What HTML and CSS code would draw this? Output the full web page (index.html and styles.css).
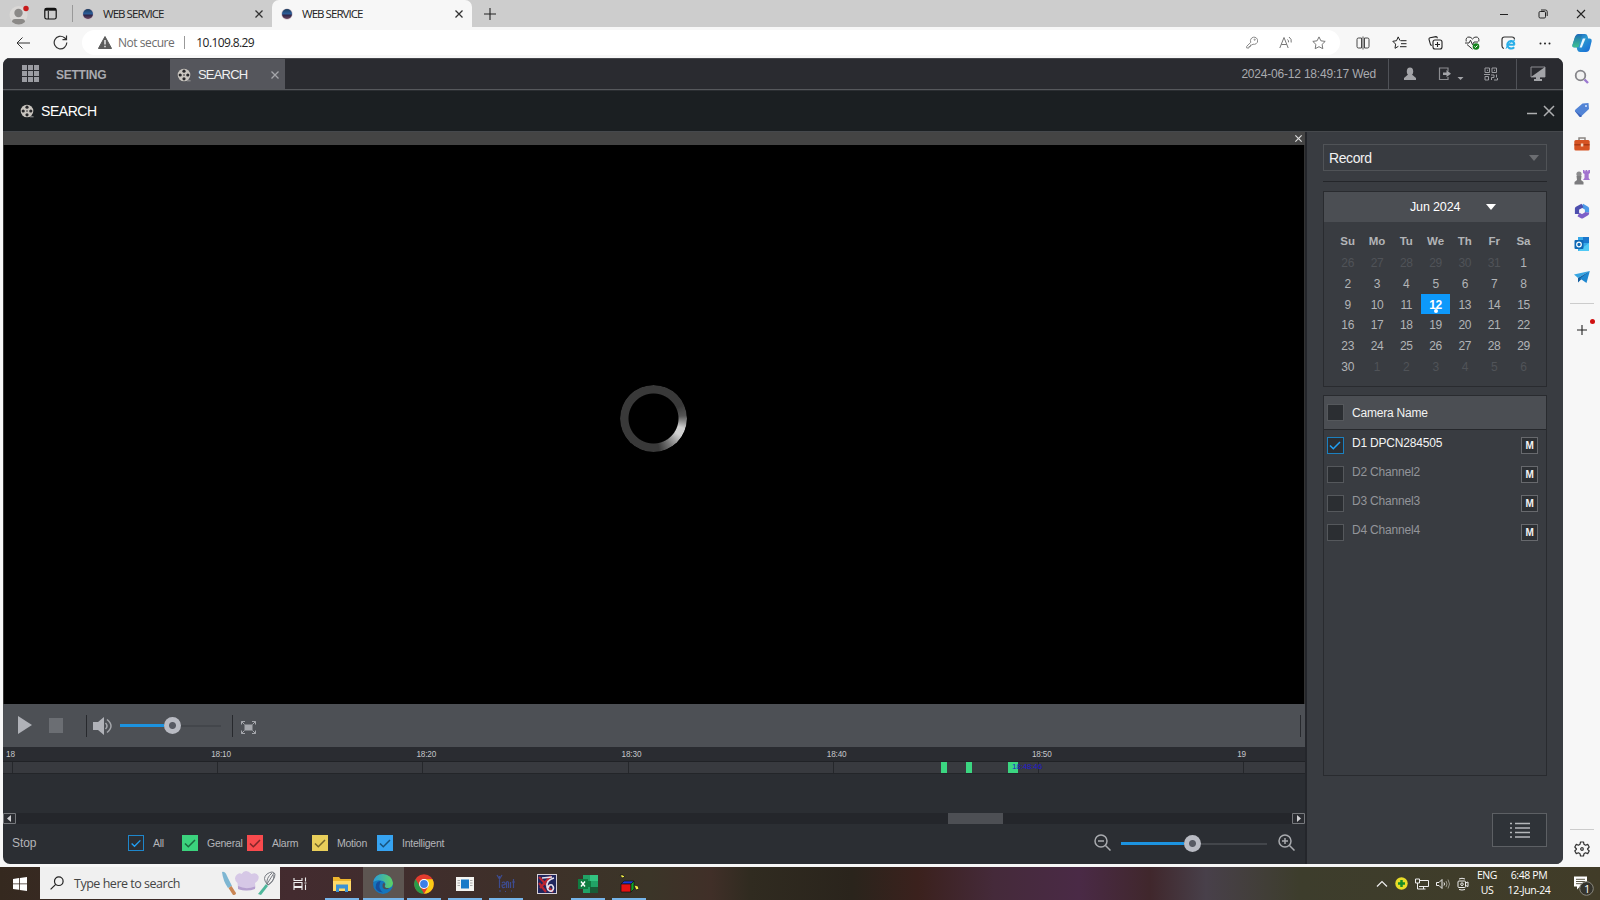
FILE: index.html
```html
<!DOCTYPE html>
<html lang="en">
<head>
<meta charset="utf-8">
<title>WEB SERVICE</title>
<link rel="stylesheet" href="styles.css">
</head>
<body>
<svg width="0" height="0" class="defs">
  <defs>
    <linearGradient id="gCop" x1="0" y1="0" x2="1" y2="1"><stop offset="0" stop-color="#1b4ab8"/><stop offset=".45" stop-color="#2b9ad0"/><stop offset="1" stop-color="#1565d8"/></linearGradient>
    <linearGradient id="gTeal" x1="0" y1="0" x2="0" y2="1"><stop offset="0" stop-color="#1b6fb5"/><stop offset="1" stop-color="#3fc28f"/></linearGradient>
    <linearGradient id="gEdge" x1="0" y1="0" x2="1" y2="0"><stop offset="0" stop-color="#2a9bdc"/><stop offset="1" stop-color="#5fd35f"/></linearGradient>
    <linearGradient id="gFav" x1="0" y1="0" x2="0" y2="1"><stop offset="0" stop-color="#1d3c5c"/><stop offset=".5" stop-color="#2e5f9c"/><stop offset=".6" stop-color="#2d2447"/><stop offset="1" stop-color="#6d4761"/></linearGradient>
    <symbol id="globe" viewBox="0 0 12 12"><circle cx="6" cy="6" r="5.6" fill="#c9b9c4"/><circle cx="6" cy="6" r="5" fill="url(#gFav)"/></symbol>
    <symbol id="x" viewBox="0 0 10 10"><path d="M1.5 1.5l7 7M8.500 1.500l-7 7" stroke="currentColor" fill="none" stroke-width="1.3"/></symbol>
    <symbol id="reel" viewBox="0 0 14 14"><circle cx="7" cy="7" r="6.3" fill="#c9c5bf"/><g fill="#28282a"><circle cx="7" cy="3.2" r="1.6"/><circle cx="7" cy="10.8" r="1.6"/><circle cx="3.2" cy="7" r="1.6"/><circle cx="10.8" cy="7" r="1.6"/><circle cx="7" cy="7" r=".8"/></g><path d="M10 12.8h3.6" stroke="#999"/></symbol>
    <symbol id="tick" viewBox="0 0 16 16"><path d="M3 8.500l3.300 3.300L13 5" fill="none" stroke="currentColor" stroke-width="1.5"/></symbol>
  </defs>
</svg>

<header class="tabs">
  <svg class="profile" width="22" height="24" viewBox="0 0 22 24"><circle cx="10.500" cy="13" r="9" fill="#dad8d6"/><circle cx="10.500" cy="11" r="4.200" fill="#8b8987"/><path d="M4 20q0-3 3-3h7q3 0 3 3-6 5-13 0z" fill="#8b8987"/><circle cx="18" cy="6.500" r="2.700" fill="#c81a1a"/></svg>
  <svg class="spaces" width="13" height="13" viewBox="0 0 13 13"><rect x=".8" y="1.300" width="11.400" height="10.700" rx="1.800" fill="none" stroke="#111" stroke-width="1.200"/><path d="M1 2.700h11" stroke="#111" stroke-width="2"/><path d="M4.300 4v8" stroke="#111"/></svg>
  <i class="tabs-sep"></i>
  <div class="tab tab-idle"><svg width="12" height="12"><use href="#globe"/></svg><span>WEB SERVICE</span><svg class="tab-x" width="10" height="10"><use href="#x"/></svg></div>
  <div class="tab tab-active"><svg width="12" height="12"><use href="#globe"/></svg><span>WEB SERVICE</span><svg class="tab-x" width="10" height="10"><use href="#x"/></svg></div>
  <svg class="newtab" width="12" height="12" viewBox="0 0 12 12"><path d="M6 0v12M0 6h12" stroke="#222" stroke-width="1.100"/></svg>
  <div class="win">
    <svg width="10" height="10" viewBox="0 0 10 10"><path d="M1 5.500h8" stroke="#222"/></svg>
    <svg width="10" height="10" viewBox="0 0 10 10" fill="none" stroke="#222"><rect x="1" y="2.500" width="6.500" height="6.500" rx="1.200"/><path d="M3 1h4.500Q9.200 1 9.200 2.700V7"/></svg>
    <svg width="10" height="10" viewBox="0 0 10 10"><path d="M1 1l8 8M9 1l-8 8" stroke="#222" stroke-width="1.100"/></svg>
  </div>
</header>

<nav class="toolbar">
  <svg class="back" width="14" height="14" viewBox="0 0 14 14" fill="none" stroke="#333"><path d="M14 7H1M6.500 1.500L1 7l5.500 5.500"/></svg>
  <svg class="reload" width="15" height="15" viewBox="0 0 15 15" fill="none" stroke="#333" stroke-width="1.200"><path d="M13.800 7.500A6.300 6.300 0 1 1 11.500 2.700L13.300 4.300M13.500.6v4H9.500"/></svg>
  <div class="address">
    <svg width="14" height="13" viewBox="0 0 14 13"><path d="M7 .5L13.600 12.500H.4z" fill="#5c5c5c" stroke="#5c5c5c" stroke-linejoin="round"/><path d="M7 4v4.500M7 9.800v1.400" stroke="#fff" stroke-width="1.300"/></svg>
    <span class="insecure">Not secure</span><i></i><span class="url">10.109.8.29</span>
    <div class="addr-icons">
      <svg width="12" height="13" viewBox="0 0 12 13" fill="none" stroke="#8a8a8a"><path d="M4.800 6.300A3.600 3.600 0 1 1 7 8.200L5.800 9H4.500v1.500H3V12H.7V10.300z"/><circle cx="8.700" cy="3.700" r=".6"/></svg>
      <svg width="14" height="13" viewBox="0 0 14 13" fill="none" stroke="#777"><path d="M.8 12L5 1.500 9.200 12M2.300 8.500h5.400M8.500 3.500q1.300 1 1 2.800M10 1q3 2 2.200 5.500"/></svg>
      <svg width="14" height="14" viewBox="0 0 14 14" fill="none" stroke="#777"><path d="M7 .9l1.900 3.900 4.300.6-3.100 3 .7 4.300L7 10.700l-3.800 2 .7-4.300-3.100-3 4.300-.6z"/></svg>
    </div>
  </div>
  <div class="tool-icons">
    <svg width="14" height="14" viewBox="0 0 14 14" fill="none" stroke="#333"><path d="M5.500 2H2.500Q1 2 1 3.500v7Q1 12 2.500 12h3M8.500 2h3Q13 2 13 3.500v7Q13 12 11.500 12h-3M7 .5v13M5.500 2v10M8.500 2v10" stroke-width=".9"/></svg>
    <svg width="15" height="14" viewBox="0 0 15 14" fill="none" stroke="#222"><path d="M8 4.600L6.200.9 4.500 4.700.8 5.300l2.800 2.800-.6 4.200 3.400-2M8.500 4.700h6M9 7.700h5.500M8 10.700h6.500"/></svg>
    <svg width="15" height="14" viewBox="0 0 15 14" fill="none" stroke="#222" stroke-width="1.100"><rect x="5" y="4" width="9" height="9" rx="2"/><path d="M9.500 6v5M7 8.500h5M3.800 9.500L2.600 8.800 1 3.300Q.8 2 2 1.700L8 .6q1.200 0 1.400 1.600"/></svg>
    <svg width="15" height="14" viewBox="0 0 15 14" fill="none" stroke="#333"><path d="M1.200 5.500Q.5 1 4 1q2 0 3.500 2Q9 1 11 1q3.500 0 2.800 4.500M2 8.500l5.500 4.700M0 7h4l1.500-2.800 2 4.500L9 6h4"/><circle cx="11" cy="10.500" r="3.300" fill="#13811b" stroke="none"/><path d="M9.500 10.500l1 1 2-2" stroke="#fff"/></svg>
    <svg width="15" height="14" viewBox="0 0 15 14"><path d="M13.500 3.500Q13.500 1 11 1H3.500Q1 1 1 3.500V10q0 2 2 2.500" fill="none" stroke="#333" stroke-width="1.200"/><path d="M13.700 8.800H6.500M13.200 11.200Q11 13.500 8 12 5.500 10 6.600 7.300 8 4.500 10.500 5 13.500 5.800 13.300 8.800" fill="none" stroke="#28aee8" stroke-width="2"/><path d="M5 12.700Q7 7 14 4" stroke="#28aee8" fill="none"/></svg>
    <svg width="14" height="14" viewBox="0 0 14 14" fill="#222"><circle cx="2.500" cy="7.500" r="1"/><circle cx="7" cy="7.500" r="1"/><circle cx="11.500" cy="7.500" r="1"/></svg>
    <svg width="20" height="20" viewBox="0 0 20 20"><path d="M6 1h7q2 0 2.500 2l.7 2.500H18q2 0 1.700 2.500l-2 8q-.8 3-3.700 3H8q-2 0-2.700-2l-.6-2.500H2.500Q0 14.500.4 12L3 4Q4 1 6 1z" fill="url(#gCop)"/><path d="M6 1.500h4L6.500 14.300H2.500Q0 14.300.5 12L3 4Q4 1.500 6 1.500z" fill="url(#gTeal)"/><path d="M10.800 5.500h2.700L9.800 14.500H7.600z" fill="#e8f7ff"/></svg>
  </div>
</nav>

<div class="main">
  <div class="app">
    <div class="appbar">
      <svg class="gridico" width="18" height="18" viewBox="0 0 18 18" fill="#9b9ca2"><path d="M0 0h5v5H0zM6 0h5v5H6zM12 0h5v5h-5zM0 6h5v5H0zM6 6h5v5H6zM12 6h5v5h-5zM0 12h5v5H0zM6 12h5v5H6zM12 12h5v5h-5z"/></svg>
      <span class="setting">SETTING</span>
      <div class="apptab"><svg width="14" height="14"><use href="#reel"/></svg><span>SEARCH</span><svg class="apptab-x" width="10" height="10"><use href="#x"/></svg></div>
      <span class="clock">2024-06-12 18:49:17 Wed</span>
      <div class="account">
        <svg width="14" height="14" viewBox="0 0 14 14" fill="#a3a4a8"><ellipse cx="7" cy="4.500" rx="3.200" ry="4"/><path d="M4.500 8h5l3.500 3v2H1v-2z"/></svg>
        <svg class="exit" width="26" height="14" viewBox="0 0 26 14"><path d="M10 4V1H1.500v11.500H10V10" fill="none" stroke="#8b8c90" stroke-width="1.200"/><path d="M5 5.500h3.500V3L13 6.700 8.500 10V8H5z" fill="#a3a4a8"/><path d="M19.500 10h6l-3 3z" fill="#a3a4a8"/></svg>
        <svg width="14" height="14" viewBox="0 0 14 14" fill="none" stroke="#9a9b9f"><path d="M1 1h4.500v4.500H1zM8 1h4.500v4.500H8zM1 9.500h3.500v3.500H1zM3 3.300h1M10 3.300h1M0 7.500h6M7 8h3v2.500H7.500V13M12.500 7.500v3M10 13h3.500v-2"/></svg>
      </div>
      <div class="monitor"><svg width="16" height="16" viewBox="0 0 16 16"><path d="M1 1h14v10H1z" fill="none" stroke="#8b8c90"/><path d="M15 1v10H1z" fill="#a3a4a8"/><path d="M6 11h4v2h2v2H4v-2h2z" fill="#a3a4a8"/></svg></div>
    </div>
    <div class="titlebar">
      <svg width="14" height="14"><use href="#reel"/></svg><span>SEARCH</span>
      <svg class="title-btns" width="29" height="14" viewBox="0 0 29 14" stroke="#aeafb1" stroke-width="1.500"><path d="M1 9.500h10M18 2l10 10M28 2L18 12"/></svg>
    </div>
    <div class="body">
      <section class="player">
        <div class="strip"><svg width="9" height="9"><use href="#x"/></svg></div>
        <div class="video"><div class="spinner"></div></div>
        <div class="controls">
          <svg class="play" width="14" height="18" viewBox="0 0 14 18"><path d="M0 0l14 9L0 18z" fill="#b0b2b8"/></svg>
          <b class="stop"></b><i class="vsep s1"></i>
          <svg class="speaker" width="20" height="18" viewBox="0 0 20 18"><path d="M0 5h5l6-5v18l-6-5H0z" fill="#b0b2b8"/><path d="M12.500 6q3 3 0 6M14 2.500q8 6.500 0 13" fill="none" stroke="#a5a7ac" stroke-width="1.500"/></svg>
          <div class="slider vol"><em></em><u></u></div>
          <i class="vsep s2"></i>
          <svg class="full" width="15" height="13" viewBox="0 0 15 13"><path d="M3.500 3.500h8v6h-8z" fill="#a5a7ac"/><path d="M.5 3.500v-3h3.500M11 .5h3.500v3M.5 9.500v3h3.500M11 12.500h3.500v-3M.5.5l3 3M14.500.5l-3 3M.5 12.500l3-3M14.500 12.500l-3-3" fill="none" stroke="#a5a7ac"/></svg>
          <i class="vsep s3"></i>
        </div>
        <div class="hours"><span>18</span><span>18:10</span><span>18:20</span><span>18:30</span><span>18:40</span><span>18:50</span><span>19</span></div>
        <div class="track">
          <i></i><i></i><i></i><i></i><i></i><i></i><i></i>
          <b class="clip c1"></b><b class="clip c2"></b><b class="clip c3"></b><span class="now">18:48:46</span>
        </div>
        <div class="gap"></div>
        <div class="scroll">
          <svg width="13" height="11" viewBox="0 0 13 11"><path d="M.5.5h12v10H.5z" fill="#2a2c31" stroke="#77797d"/><path d="M8 2v7L4 5.500z" fill="#d0d0d3"/></svg>
          <b></b>
          <svg class="sr" width="13" height="11" viewBox="0 0 13 11"><path d="M.5.5h12v10H.5z" fill="#2a2c31" stroke="#77797d"/><path d="M5 2v7l4-3.500z" fill="#d0d0d3"/></svg>
        </div>
        <div class="legend">
          <span class="state">Stop</span>
          <div class="types">
            <label class="all"><svg><use href="#tick"/></svg>All</label>
            <label class="general"><svg><use href="#tick"/></svg>General</label>
            <label class="alarm"><svg><use href="#tick"/></svg>Alarm</label>
            <label class="motion"><svg><use href="#tick"/></svg>Motion</label>
            <label class="smart"><svg><use href="#tick"/></svg>Intelligent</label>
          </div>
          <div class="zoom">
            <svg width="17" height="17" viewBox="0 0 17 17" fill="none" stroke="#a9abaf" stroke-width="1.500"><circle cx="7" cy="7" r="6"/><path d="M11.500 11.500l5 5M4 7h6"/></svg>
            <div class="slider zm"><em></em><u></u></div>
            <svg width="17" height="17" viewBox="0 0 17 17" fill="none" stroke="#a9abaf" stroke-width="1.500"><circle cx="7" cy="7" r="6"/><path d="M11.500 11.500l5 5M4 7h6M7 4v6"/></svg>
          </div>
        </div>
      </section>
      <aside class="panel">
        <div class="select"><span>Record</span><svg width="10" height="6" viewBox="0 0 10 6"><path d="M0 0h10L5 6z" fill="#6b6d71"/></svg></div>
        <hr>
        <div class="calendar">
          <div class="cal-head"><span>Jun 2024</span><svg width="10" height="6" viewBox="0 0 10 6"><path d="M0 0h10L5 6z" fill="#fff"/></svg></div>
          <div class="days">
            <b>Su</b><b>Mo</b><b>Tu</b><b>We</b><b>Th</b><b>Fr</b><b>Sa</b>
            <s>26</s><s>27</s><s>28</s><s>29</s><s>30</s><s>31</s><span>1</span>
            <span>2</span><span>3</span><span>4</span><span>5</span><span>6</span><span>7</span><span>8</span>
            <span>9</span><span>10</span><span>11</span><span class="today">12</span><span>13</span><span>14</span><span>15</span>
            <span>16</span><span>17</span><span>18</span><span>19</span><span>20</span><span>21</span><span>22</span>
            <span>23</span><span>24</span><span>25</span><span>26</span><span>27</span><span>28</span><span>29</span>
            <span>30</span><s>1</s><s>2</s><s>3</s><s>4</s><s>5</s><s>6</s>
          </div>
        </div>
        <div class="cameras">
          <div class="cam-head"><i></i><span>Camera Name</span></div>
          <div class="cam on"><i><svg width="16" height="16"><use href="#tick"/></svg></i><span>D1 DPCN284505</span><b>M</b></div>
          <div class="cam"><i></i><span>D2 Channel2</span><b>M</b></div>
          <div class="cam"><i></i><span>D3 Channel3</span><b>M</b></div>
          <div class="cam"><i></i><span>D4 Channel4</span><b>M</b></div>
        </div>
        <div class="listbtn"><svg width="20" height="16" viewBox="0 0 20 16" stroke="#b5b7ba" stroke-width="1.300"><path d="M0 1.500h2M5 1.500h15M0 6h2M5 6h15M0 10.500h2M5 10.500h15M0 15h2M5 15h15"/></svg></div>
      </aside>
    </div>
  </div>
  <aside class="edgebar">
    <svg viewBox="0 0 16 16"><circle cx="6.500" cy="6.500" r="4.800" fill="#f2f2f2" stroke="#85858a" stroke-width="1.800"/><path d="M10.500 10.500l3.500 3.500" stroke="#9b78d0" stroke-width="2.400"/></svg>
    <svg viewBox="0 0 16 16"><path d="M8.500 1.500l6-.5.500 6-8 7.500q-1 .5-1.500-.5L1 9.500Q.5 8.500 1.500 7.500z" fill="#5284d6"/><path d="M1 9L8 14l-1 1q-1 .3-2-.8z" fill="#3b62b8"/><circle cx="12" cy="4" r="1" fill="#dceaff"/></svg>
    <svg viewBox="0 0 16 16"><path d="M5 4V2h6v2" fill="none" stroke="#8a8582" stroke-width="1.500"/><rect x=".3" y="4" width="15.400" height="10.500" rx="1.500" fill="#d65322"/><path d="M.5 8h15v1.500H.5z" fill="#a93b16"/><rect x="6.800" y="7.500" width="2.500" height="3" fill="#f5d7c0"/></svg>
    <svg viewBox="0 0 16 16"><path d="M9 1h1.500v1.300h1V1h1.800v1.300h1V1H16v3l-1.300 1v4l1.300 2H9l1.500-2V5L9 4z" fill="#a274cf"/><circle cx="5" cy="5" r="2.600" fill="#8b8b8d"/><path d="M2.500 7h5L7 11l2.500 2v2.500H.5V13L3 11z" fill="#7c7c7e"/></svg>
    <svg viewBox="0 0 16 16" fill="none" stroke-width="4.200" stroke-linejoin="round"><path d="M8 2.500l5 3v4" stroke="#4c9ae8"/><path d="M13 9.500v1L8 13.500 4.500 11.500" stroke="#7d5fc8"/><path d="M3 11V5.500L8.500 2.500" stroke="#4e4fae"/></svg>
    <svg viewBox="0 0 16 16"><path d="M4 1h11v14H4z" fill="#36a8e8"/><path d="M9 1h6v6H9z" fill="#1b77cc"/><path d="M4 15l11-8v8z" fill="#50c9f5"/><rect x=".5" y="4" width="9" height="9" rx="1" fill="#0e68b5"/><circle cx="5" cy="8.500" r="2.300" fill="none" stroke="#fff" stroke-width="1.200"/></svg>
    <svg viewBox="0 0 16 16"><path d="M15.800 2L0 5.500 4 9z" fill="#36a5e2"/><path d="M15.800 2L4 9v4.500l3-3z" fill="#135d9e"/><path d="M15.800 2L6 9.500l6.500 4.500z" fill="#1e87d0"/></svg>
    <hr>
    <div class="add"><svg viewBox="0 0 16 16"><path d="M8 3v10M3 8h10" stroke="#222" stroke-width="1.100"/></svg><u></u></div>
    <hr class="low">
    <svg class="gear" viewBox="0 0 16 16" fill="none" stroke="#333" stroke-width="1.200"><path d="M6.500 1h3l.5 2.300 1.500.9 2.200-.8 1.500 2.600L13.500 8l1.700 2-1.500 2.600-2.200-.8-1.500.9L9.500 15h-3L6 12.700l-1.500-.9-2.200.8L.8 10l1.700-2L.8 6l1.500-2.600 2.200.8L6 3.300z" stroke-linejoin="round"/><circle cx="8" cy="8" r="1.300"/></svg>
  </aside>
</div>

<footer class="taskbar">
  <div class="start"><svg width="14" height="14" viewBox="0 0 14 14" fill="#fff"><path d="M0 2l6-.9v5.500H0zM6.800 1L14 0v6.600H6.800zM0 7.300h6v5.500L0 12zM6.800 7.300H14V14l-7.200-1z"/></svg></div>
  <div class="search">
    <svg width="14" height="14" viewBox="0 0 14 14" fill="none" stroke="#222" stroke-width="1.200"><circle cx="8.800" cy="5.200" r="4.300"/><path d="M5.700 8.300L.6 13.400"/></svg>
    <span>Type here to search</span>
    <svg class="chef" width="55" height="28" viewBox="0 0 55 28"><path d="M1 3q3-1 5 4l5 10-4 2Q2 12 1 3z" fill="#7eb6d2"/><path d="M7.500 19l3-2 4.500 7q0 2-3 2z" fill="#c98654"/><path d="M17 19l-.5-5Q12 10 15.500 6q3-3 5-1 4-6 10 0 5-2 7 2 1 4-3.500 7l.5 5q-9 4-17.500 1z" fill="#d6c8e6"/><path d="M17 17q8 4 17 .5V20q-8 3-17 0z" fill="#b5a0cf"/><path d="M46 15Q41 9 46 5q6-4 8 0 0 6-7 11zM46 15L53 4M46 15q-1-6 5-11M47 16q6-3 6-10" fill="none" stroke="#777b82"/><path d="M45 15l2 2-7 9-3-1z" fill="#4fb79b"/></svg>
  </div>
  <div class="tasks">
    <div class="tk"><svg width="16" height="16" viewBox="0 0 16 16" fill="none" stroke="#eee" stroke-width="1.100"><path d="M2 2v2.500h8V2M2 14v-2.500h8V14M2 6.500h8v4H2zM13.500 1.500v4M13.500 8.500V14M12.500 7h2"/></svg></div>
    <div class="tk run"><svg width="20" height="20" viewBox="0 0 20 20"><path d="M1 3h6l1.500 2H19v12H1z" fill="#eeb52e"/><path d="M1 7h18v10H1z" fill="#ffd968"/><path d="M4 10.500h12V18h-3v-3.500H7V18H4z" fill="#3c92d4"/></svg></div>
    <div class="tk sel"><svg width="22" height="22" viewBox="0 0 22 22"><circle cx="11" cy="11" r="10" fill="#1576be"/><path d="M1.300 9Q3 1 11 1q9 1 10 9-.3 5-5.500 5-3 0-2.500-2 1.500-3-2-5-6-2-9.700 1z" fill="url(#gEdge)"/><path d="M8 10q-2 6 3 9.500-9-1-7-8 1-3.500 5-3.500-1 1-1 2z" fill="#174e9c"/><path d="M12 9.500q1.800 1.500.7 3.500-.2 2.500 4.300 2l-1 1q-5 1-5.500-2.500Q10 11 12 9.500z" fill="#4d5052"/></svg></div>
    <div class="tk run"><svg width="20" height="20" viewBox="0 0 20 20"><circle cx="10" cy="10" r="9.800" fill="#e33b2e"/><path d="M1.500 5.100L6 12.500 10 19.800A9.800 9.800 0 0 1 1.500 5.100z" fill="#289c49"/><path d="M10 19.800A9.800 9.800 0 0 0 18.500 5.200H10L14.300 12.500z" fill="#fbcb16"/><circle cx="10" cy="10" r="4.900" fill="#fff"/><circle cx="10" cy="10" r="3.900" fill="#3d7fe8"/></svg></div>
    <div class="tk run"><svg width="18" height="14" viewBox="0 0 18 14"><path d="M0 0h18v14H0z" fill="#f4f4f1"/><path d="M5 2.500h8v9H5z" fill="#187ac8"/><path d="M1.500 3.500h2.500M1.500 6h2.500M1.500 8.500h2.500M14 3.500h2.500M14 6h2.500M14 8.500h2.500" stroke="#aaa"/></svg></div>
    <div class="tk run"><svg width="20" height="20" viewBox="0 0 20 20" fill="none" stroke="#3d4c91" stroke-width="1.200"><path d="M1 1l2.500 4L6 1M3.500 2v12M6 9q2-2 3 0t-3 2q0 4 3 2M10.500 14V8q2-1 2 1v5M14.500 8v6M16 8h3M17.500 5v9M3 17h2M9 17.500h1M15 17h1"/></svg></div>
    <div class="tk"><svg width="20" height="20" viewBox="0 0 20 20"><path d="M0 0h20v20H0z" fill="#d7d0d6"/><path d="M1 1h18v18H1z" fill="#20265e"/><path d="M2 3l14 15M3 14L14 2M2 9l7 9" stroke="#bc2430" stroke-width="2.200"/><path d="M5 4l10-1M17 4Q9 6 10 13q1 5 5 4 3-3 0-6-3-1-4 3" fill="none" stroke="#e8e0ec" stroke-width="1.600"/></svg></div>
    <div class="tk run"><svg width="22" height="20" viewBox="0 0 22 20"><path d="M6 1h15v18H6z" fill="#21a366"/><path d="M13 1h8v6h-8z" fill="#33c481"/><path d="M6 7h8v6H6z" fill="#107c41"/><path d="M13 13h8v6h-8z" fill="#185c37"/><path d="M1 5h10v10H1z" fill="#107c41"/><path d="M4 7.500l4 5M8 7.500l-4 5" stroke="#fff" stroke-width="1.400"/></svg></div>
    <div class="tk run"><svg width="20" height="20" viewBox="0 0 20 20" stroke="#111" stroke-width=".7"><path d="M2 10l3-3h10l-3 3z" fill="#1a3bd8"/><path d="M2 10h10v8H2z" fill="#e51212"/><path d="M12 10l3-3v8l-3 3z" fill="#10a52a"/><path d="M1 1h3l2 2-3 1zM15 11l4 1 1 3-3 1z" fill="#f5ef4a"/></svg></div>
  </div>
  <div class="tray">
    <svg width="12" height="12" viewBox="0 0 12 12"><path d="M1 8.500l5-5 5 5" fill="none" stroke="#eee" stroke-width="1.200"/></svg>
    <svg width="13" height="13" viewBox="0 0 13 13"><circle cx="6.500" cy="6.500" r="6.200" fill="#e8dc28"/><path d="M6.500 3v7M3 6.500h7" stroke="#178a28" stroke-width="2.500"/></svg>
    <svg width="14" height="12" viewBox="0 0 14 12" fill="none" stroke="#eee"><path d="M5 2.500h8.500v6H4M.5 1h4v4h-4zM2.500 5v6h8M8.500 8.500V11"/></svg>
    <svg width="14" height="12" viewBox="0 0 14 12" fill="none" stroke="#eee"><path d="M.5 4.500H3L6 1.500v9L3 7.500H.5z"/><path d="M8 4.500q1 1.500 0 3"/><path d="M10 3q2 3 0 6M12 1.500q3 4.500 0 9" stroke="#99968a"/></svg>
    <svg width="12" height="14" viewBox="0 0 12 14" fill="none" stroke="#eee"><rect x="1" y="4" width="7.500" height="6.500" rx="1"/><circle cx="5" cy="7.200" r="1.300"/><path d="M8.500 6l2.500-1v4.500l-2.500-1M2 2q3-1.500 6 0M2 12.500q3 1 6 0"/></svg>
  </div>
  <div class="lang"><span>ENG</span><span>US</span></div>
  <div class="time"><span>6:48 PM</span><span>12-Jun-24</span></div>
  <div class="notify"><svg width="22" height="22" viewBox="0 0 22 22"><path d="M1 1.500h13v10H7l-3 3v-3H1z" fill="#fff"/><path d="M3 4.300h9M3 6.500h9M3 8.700h6" stroke="#4a4533" stroke-width=".9"/><circle cx="13.500" cy="13.500" r="6.800" fill="#34332c" stroke="#8a887e"/></svg><span>1</span></div>
</footer>
</body>
</html>
```

FILE: styles.css
```css
* { box-sizing: border-box; }
html, body { margin: 0; width: 1600px; height: 900px; overflow: hidden; }
body { display: flex; flex-direction: column; background: #f7f7f7; font-family: "Liberation Sans", Arial, sans-serif; }
svg { display: block; flex: none; }
i, b, u, s, em { font-style: normal; text-decoration: none; }
.defs { position: absolute; }

/* browser tabs */
.tabs { display: flex; align-items: center; height: 27px; flex: none; background: #cdcdcd; font: 11.500px "Open Sans", sans-serif; color: #222; }
.profile { margin-left: 8px; }
.spaces { margin-left: 14px; }
.tabs-sep { width: 1px; height: 17px; background: #999; margin-left: 15px; }
.tab { display: flex; align-items: center; height: 27px; letter-spacing: -.95px; }
.tab span { margin: -1px 0 0 9px; white-space: nowrap; }
.tab-x { margin-left: auto; color: #333; }
.tab-idle { width: 199px; padding: 0 8px 0 9px; }
.tab-active { width: 200px; padding: 0 8px 0 9px; background: #f7f7f7; border-radius: 7px 7px 0 0; }
.newtab { margin-left: 12px; }
.win { display: flex; gap: 28.500px; margin-left: auto; margin-right: 14px; }

/* address row */
.toolbar { display: flex; align-items: center; height: 31px; flex: none; background: #f7f7f7; font: 12px "Open Sans", sans-serif; }
.back { margin-left: 16px; }
.reload { margin-left: 23px; }
.address { display: flex; align-items: center; width: 1258px; height: 25px; margin-left: 14px; padding-left: 16px; background: #fff; border-radius: 13px; }
.insecure { color: #6c6c6c; margin-left: 6px; letter-spacing: -.45px; }
.address i { width: 1px; height: 13px; background: #999; margin: 0 11px 0 10px; }
.url { color: #222; letter-spacing: -.6px; }
.addr-icons { display: flex; gap: 20px; align-items: center; margin: 0 14px 0 auto; }
.addr-icons svg:nth-child(2) { margin-left: 1px; margin-right: -1px; }
.tool-icons { display: grid; grid-template-columns: repeat(7, 36.500px); place-items: center; margin-left: 5px; }

/* page frame */
.main { display: flex; flex: none; height: 809px; padding: 0 0 3px 3px; }
.app { display: flex; flex-direction: column; width: 1560px; height: 806px; border-radius: 7px; overflow: hidden; background: #2b2e33; letter-spacing: -.02em; }
.appbar { display: flex; align-items: center; height: 32px; flex: none; background: #2a2b30; border-top: 1px solid #44454a; border-bottom: 1px solid #56585c; color: #a9aaaf; }
.gridico { margin-left: 19px; }
.setting { width: 114px; margin-left: 16px; padding-top: 2px; font-size: 12px; font-weight: bold; letter-spacing: -.25px; }
.apptab { display: flex; align-items: center; width: 115px; height: 30px; padding: 1px 5px 0 7px; background: #55565c; color: #f0f0f0; font-size: 13px; }
.apptab span { margin-left: 7px; letter-spacing: -.8px; }
.apptab-x { margin-left: auto; color: #a5a6aa; }
.clock { margin-left: auto; font-size: 12px; letter-spacing: -.2px; white-space: nowrap; }
.account { display: flex; align-items: center; width: 129px; height: 30px; margin-left: 12px; padding-left: 14px; border-left: 1px solid #505258; border-right: 1px solid #505258; }
.exit { margin: 0 20px 0 21px; }
.monitor { width: 46px; padding-left: 13px; }
.titlebar { display: flex; align-items: center; height: 42px; flex: none; padding: 0 8px 0 17px; background: #1b1f22; border-top: 1px solid #2b2e32; border-bottom: 1px solid #45484c; color: #fff; font-size: 14px; letter-spacing: -.45px; }
.titlebar span { margin-left: 7px; }
.title-btns { margin-left: auto; }
.body { display: flex; flex: 1; min-height: 0; }

/* player */
.player { display: flex; flex-direction: column; width: 1304px; border-right: 2px solid #24262b; }
.strip { display: flex; justify-content: flex-end; align-items: center; height: 13px; padding-right: 2px; background: #444; color: #ddd; }
.video { display: grid; place-items: center; height: 559px; background: #000; border-left: 1px solid #333; border-right: 1px solid #333; }
.spinner { width: 67px; height: 67px; margin: 0 1px 12px 0; border-radius: 50%; background: conic-gradient(#393939 0 65deg, #555 85deg, #d0d0d0 108deg, #d0d0d0 122deg, #777 148deg, #393939 170deg 360deg); -webkit-mask: radial-gradient(circle, transparent 24.500px, #000 25.500px); mask: radial-gradient(circle, transparent 24.500px, #000 25.500px); }
.controls { display: flex; align-items: center; height: 43px; background: #4d5055; }
.play { margin: -1px 0 0 15px; }
.stop { width: 14px; height: 15px; background: #6b6e73; margin: -1px 0 0 17px; }
.vsep { width: 1px; height: 22px; background: #27292d; }
.s1 { margin-left: 23px; }
.speaker { margin-left: 6px; }
.slider { display: flex; align-items: center; height: 18px; background: linear-gradient(#43464b, #43464b) center / 100% 2px no-repeat; }
.slider em { height: 3px; background: #1c93e0; }
.slider u { width: 17px; height: 17px; border-radius: 50%; background: radial-gradient(circle, #575a63 0 3px, #b9bbc3 4px 8px); }
.vol { width: 101px; margin-left: 7px; }
.vol em { width: 44px; }
.s2 { margin-left: 11px; }
.full { margin: 4px 0 0 8px; }
.s3 { margin: 0 4px 0 auto; }
.hours { display: grid; grid-template-columns: repeat(6, 205.200px) auto; height: 14px; padding: 3px 0 0 3px; background: #2a2c31; color: #c5c6ca; font-size: 8.200px; line-height: 9px; letter-spacing: -.15px; }
.track { display: grid; grid-template-columns: 10px repeat(6, 205.200px) 1fr; position: relative; height: 13px; background: #383a3f; border-top: 1px solid #202226; border-bottom: 1px solid #232529; }
.track i { border-right: 1px solid #25272b; }
.clip { position: absolute; top: 0; width: 6px; height: 11px; background: #3bd681; }
.c1 { left: 938px; }
.c2 { left: 963px; }
.c3 { left: 1005px; width: 10px; }
.now { position: absolute; left: 1009px; top: 0; color: #2219d0; font-size: 8px; line-height: 9px; letter-spacing: -.15px; }
.gap { height: 39px; }
.scroll { display: flex; align-items: center; height: 11px; background: #24262b; }
.scroll b { width: 55px; height: 11px; margin-left: 932px; background: #4d4f54; }
.sr { margin-left: auto; }
.legend { display: flex; align-items: center; flex: 1; padding-bottom: 3px; color: #b4b5b9; }
.state { width: 125px; padding: 1px 0 0 9px; font-size: 12px; letter-spacing: -.1px; }
.types { display: grid; grid-template-columns: 54px 65px 65px 65px 100px; font-size: 10.500px; letter-spacing: -.25px; }
.types label { display: flex; align-items: center; height: 17px; gap: 9px; white-space: nowrap; }
.types svg { width: 16px; height: 16px; }
.all svg { border: 1px solid #1e86cb; color: #21a0f5; }
.general svg { background: #3bd27d; color: #1b693f; }
.alarm svg { background: #f84a4d; color: #802629; }
.motion svg { background: #e8ce5a; color: #75672b; }
.smart svg { background: #36a3f1; color: #18527c; }
.zoom { display: flex; align-items: center; margin: 0 10px 0 auto; }
.zm { width: 146px; margin: 2px 11px 0 10px; }
.zm em { width: 63px; }

/* right panel */
.panel { display: flex; flex-direction: column; align-items: flex-start; flex: 1; padding: 12px 0 0 16px; background: #393c41; }
.select { display: flex; align-items: center; justify-content: space-between; width: 224px; height: 27px; padding: 0 7px 0 5px; border: 1px solid #505357; color: #f2f2f2; font-size: 14px; letter-spacing: -.4px; }
.panel hr { width: 224px; height: 1px; margin: 10px 0 9px; border: 0; background: #24262a; }
.calendar { width: 224px; height: 196px; border: 1px solid #292b2f; }
.cal-head { display: flex; align-items: center; height: 30px; padding-left: 86px; background: #4b4e53; color: #fff; font-size: 12.500px; letter-spacing: -.15px; }
.cal-head svg { margin-left: 26px; }
.days { display: grid; grid-template-columns: repeat(7, 29.300px); grid-auto-rows: 20.850px; padding: 9px 0 0 9px; color: #b2b4b7; font-size: 12px; text-align: center; line-height: 22px; letter-spacing: -.4px; }
.days b { font-size: 11.500px; letter-spacing: 0; line-height: 21px; }
.days s { color: #505358; }
.days .today { position: relative; background: #0d99fb; color: #fff; font-weight: bold; }
.today::after { content: ""; position: absolute; left: 13px; bottom: 1px; width: 4px; height: 4px; border-radius: 50%; background: #fff; }
.cameras { width: 224px; height: 381px; margin-top: 8px; border: 1px solid #292b2f; font-size: 12px; letter-spacing: -.2px; }
.cam-head { display: flex; align-items: center; height: 34px; padding-left: 3px; background: #4b4e53; border-bottom: 1px solid #26282c; color: #f2f2f2; }
.cameras i { width: 17px; height: 17px; background: #2b2e32; border: 1px solid #55585c; }
.cameras span { margin-left: 8px; }
.cam { display: flex; height: 29.100px; padding: 7px 8px 0 3px; color: #93959a; }
.cam span { line-height: 13px; }
.cam b { display: grid; place-items: center; width: 17px; height: 17px; margin-left: auto; border: 1px solid #67696d; background: #2d3034; color: #f4f4f4; font-size: 10px; }
.cam.on { color: #f4f4f4; }
.cam.on i { border-color: #1c80bf; color: #21a0f5; }
.cam.on i svg { margin: -1px; }
.listbtn { display: grid; place-items: center; width: 55px; height: 34px; margin: 37px 0 0 169px; background: #2f3338; border: 1px solid #5d6064; }

/* edge sidebar */
.edgebar { display: flex; flex-direction: column; align-items: center; width: 37px; padding-top: 11px; }
.edgebar > svg { width: 16px; height: 16px; margin-bottom: 17.400px; }
.edgebar hr { width: 24px; height: 1px; margin: 0 0 18px; border: 0; background: #ccc; }
.add { position: relative; }
.add svg { width: 16px; height: 16px; }
.add u { position: absolute; left: 16px; top: -3px; width: 5px; height: 5px; border-radius: 50%; background: #d01010; }
.edgebar .low { margin: auto 0 11px; }
.edgebar .gear { margin-bottom: 7px; }

/* taskbar */
.taskbar { display: flex; align-items: stretch; flex: none; height: 33px; color: #fff; background: linear-gradient(90deg, #35291f 0, #432b2f 290px, #402d2d 400px, #3e3029 520px, #3b3528 650px, #402f28 711px, #302b20 750px, #2a241c 852px, #3b211d 918px, #452a3a 994px, #4a2a46 1079px, #40272c 1150px, #48404a 1206px, #3d3d2c 1300px, #413c28 1600px); }
.start { display: grid; place-items: center; width: 40px; }
.search { display: flex; align-items: center; width: 240px; margin-bottom: 1px; padding-left: 10px; background: #f0f0f0; color: #444; font: 12.500px "Open Sans", sans-serif; }
.search span { margin-left: 10px; letter-spacing: -.48px; }
.chef { margin: 0 4px 0 auto; }
.tasks { display: flex; }
.tk { display: grid; place-items: center; width: 40.900px; }
.tk:nth-child(2) { margin-left: 1px; }
.run { background: linear-gradient(#76b5ea, #76b5ea) center bottom / 34px 2px no-repeat; }
.sel { background: linear-gradient(#76b5ea, #76b5ea) center bottom / 100% 2px no-repeat #5d5551; }
.tray { display: flex; align-items: center; gap: 7px; margin-left: auto; }
.lang, .time { display: flex; flex-direction: column; align-items: center; font: 10.500px/15px "Open Sans", sans-serif; letter-spacing: -.4px; padding-top: 1px; white-space: nowrap; }
.lang { width: 36px; }
.time { width: 48px; }
.notify { position: relative; width: 47px; padding: 8px 0 0 20px; }
.notify span { position: absolute; left: 31px; top: 14px; font: 11px "Open Sans", sans-serif; }
```
